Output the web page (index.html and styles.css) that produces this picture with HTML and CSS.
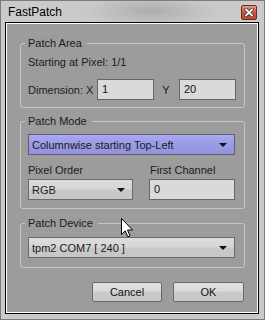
FILE: index.html
```html
<!DOCTYPE html>
<html lang="en">
<head>
  <meta charset="UTF-8" />
  <meta name="viewport" content="width=device-width, initial-scale=1.0"/>
  <title>FastPatch</title>
  <link rel="stylesheet" href="styles.css">
</head>
<body>
  <div class="window">
    <div class="titlebar">
      <span class="title">FastPatch</span>
      <span class="close">
        <svg width="10" height="9" viewBox="0 0 10 9">
          <path d="M2 1.5 L8 7.5 M8 1.5 L2 7.5" stroke="#3a3a3a" stroke-width="3.6" stroke-linecap="square"/>
          <path d="M2 1.5 L8 7.5 M8 1.5 L2 7.5" stroke="#ffffff" stroke-width="1.8" stroke-linecap="square"/>
        </svg>
      </span>
    </div>

    <div class="client">
      <fieldset class="group area">
        <legend>Patch Area</legend>
        <div class="line">Starting at Pixel: 1/1</div>
        <div class="dim-row">
          <span>Dimension: X</span>
          <div class="edit">1</div>
          <span class="y-label">Y</span>
          <div class="edit">20</div>
        </div>
      </fieldset>

      <fieldset class="group mode">
        <legend>Patch Mode</legend>
        <div class="select hot">
          <span>Columnwise starting Top-Left</span>
          <i class="arrow"></i>
        </div>
        <div class="pair labels">
          <span class="col-left">Pixel Order</span>
          <span class="col-right">First Channel</span>
        </div>
        <div class="pair">
          <div class="select col-left">
            <span>RGB</span>
            <i class="arrow"></i>
          </div>
          <div class="edit col-right">0</div>
        </div>
      </fieldset>

      <fieldset class="group device">
        <legend>Patch Device</legend>
        <div class="select">
          <span>tpm2 COM7 [ 240 ]</span>
          <i class="arrow"></i>
        </div>
      </fieldset>

      <div class="buttons">
        <div class="btn cancel">Cancel</div>
        <div class="btn ok">OK</div>
      </div>
    </div>

    <svg class="cursor" width="13" height="20" viewBox="0 0 13 20">
      <path d="M0.5 0.5 L0.5 16.5 L4.2 12.9 L6.8 18.8 L9 17.8 L6.5 12 L11.5 12 Z" fill="#ffffff" stroke="#000000" stroke-width="1" stroke-linejoin="miter"/>
    </svg>
  </div>
</body>
</html>
```

FILE: styles.css
```css
* {
  box-sizing: border-box;
}
body {
  margin: 0;
  font-family: "Liberation Sans", Arial, sans-serif;
  font-size: 11px;
  color: #1b1b1b;
}
.window {
  position: relative;
  width: 265px;
  height: 320px;
  border: 1px solid #7c7c7c;
  background: #cacaca;
}
.titlebar {
  height: 21px;
  display: flex;
  align-items: center;
  justify-content: space-between;
  padding: 0 7px 0 7px;
  background: radial-gradient(ellipse 70px 16px at 150px 10px, #adadad, #c5c5c5 80%, #cacaca);
}
.title {
  font-size: 12px;
  color: #000;
}
.close {
  width: 16px;
  height: 15px;
  margin-top: 1px;
  display: flex;
  align-items: center;
  justify-content: center;
  border: 1px solid #6e2a1f;
  border-radius: 2px;
  background: linear-gradient(#e89a85, #d2553c 50%, #c4442b);
}
.client {
  height: 292px;
  margin: 0 5px 5px 4px;
  padding: 0 13px 0 14px;
  border: 1px solid #000;
  box-shadow: inset 0 0 0 1px #fff;
  background: #9c9c9c;
  display: flex;
  flex-direction: column;
}
.group {
  margin: 0;
  min-width: 0;
  border: 1px solid #c6c6c6;
  border-radius: 3px;
  padding: 0 9px 0 7px;
}
.group legend {
  margin-left: -3px;
  padding: 0 5px 0 3px;
  line-height: 14px;
}
.area {
  margin-top: 13px;
  padding-top: 5px;
  padding-bottom: 7px;
}
.mode {
  margin-top: 6px;
  padding-top: 6px;
  padding-bottom: 8px;
}
.device {
  margin-top: 7px;
  padding-top: 7px;
  padding-bottom: 9px;
}
.line {
  line-height: 14px;
}
.dim-row {
  margin-top: 10px;
  display: grid;
  grid-template-columns: 69px 57px 25px 57px;
  align-items: center;
}
.y-label {
  text-align: center;
  padding-right: 1px;
}
.edit {
  height: 21px;
  line-height: 19px;
  padding-left: 4px;
  border: 1px solid #666;
  background: #dadada;
  color: #101030;
}
.select {
  height: 21px;
  display: flex;
  align-items: center;
  justify-content: space-between;
  padding: 0 7px 0 3px;
  border: 1px solid #6a6a6a;
  background: linear-gradient(#dcdcdc 0, #d6d6d6 48%, #c9c9c9 52%, #c6c6c6);
}
.select.hot {
  border-color: #5e5e78;
  background: linear-gradient(#a8a8f0, #9b9be6 50%, #9393dc);
}
.arrow {
  width: 0;
  height: 0;
  border-left: 4px solid transparent;
  border-right: 4px solid transparent;
  border-top: 4px solid #111;
  margin-top: 1px;
}
.pair {
  display: flex;
  justify-content: space-between;
  margin-top: 2px;
}
.pair.labels {
  margin-top: 8px;
  line-height: 14px;
}
.pair .col-left {
  width: 105px;
}
.pair .col-right {
  width: 86px;
}
.labels .col-right {
  padding-left: 1px;
}
.buttons {
  margin-top: 14px;
  display: flex;
  justify-content: flex-end;
  gap: 11px;
  padding-right: 1px;
}
.btn {
  height: 20px;
  line-height: 18px;
  text-align: center;
  border: 1px solid #6a6a6a;
  border-radius: 2px;
  background: linear-gradient(#e0e0e0 0, #dadada 45%, #cbcbcb 50%, #c8c8c8);
  color: #111;
}
.cancel {
  width: 70px;
}
.ok {
  width: 71px;
}
.cursor {
  position: absolute;
  left: 120px;
  top: 217px;
}
```
